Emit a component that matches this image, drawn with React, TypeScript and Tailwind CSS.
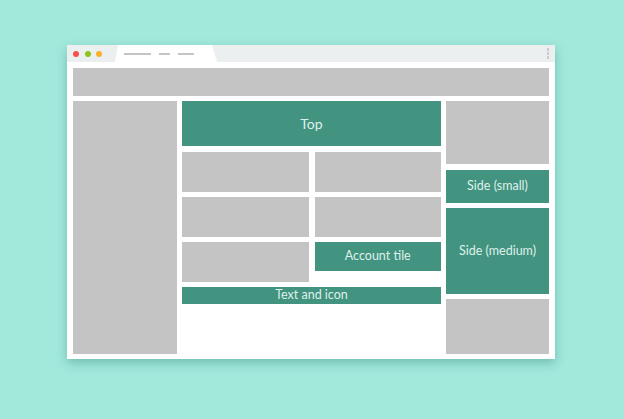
import React from "react";

const Gray = ({ className = "" }: { className?: string }) => (
  <div className={`bg-[#c4c4c4] ${className}`} />
);

const Green = ({ className = "", children }: { className?: string; children: React.ReactNode }) => (
  <div
    className={`bg-[#42937f] text-[#dff1eb] flex items-center justify-center leading-none ${className}`}
  >
    {children}
  </div>
);

export default function App() {
  return (
    <div
      className="w-[624px] h-[419px] bg-[#a2e9dc] pt-[45px] pl-[67px] overflow-hidden"
      style={{ fontFamily: "Lato, 'Open Sans', sans-serif" }}
    >
      <div className="w-[488px] h-[314px] bg-white flex flex-col shadow-[0_4px_10px_rgba(20,110,90,0.35)]">
        {/* title bar */}
        <div className="h-[17px] bg-[#ecefef] flex items-center relative">
          <div className="flex items-center gap-[5.5px] pl-[6px]">
            <span className="w-[6px] h-[6px] rounded-full bg-[#fb4e4e]" />
            <span className="w-[6px] h-[6px] rounded-full bg-[#8fc41a]" />
            <span className="w-[6px] h-[6px] rounded-full bg-[#fbb030]" />
          </div>
          <div className="ml-[13px] h-[17px] w-[102px] bg-white [clip-path:polygon(3px_0,97px_0,102px_100%,0_100%)] flex items-center">
            <span className="ml-[9px] w-[27px] h-[2px] bg-[#c2c4c6]" />
            <span className="ml-[8px] w-[11px] h-[2px] bg-[#c2c4c6]" />
            <span className="ml-[8px] w-[16px] h-[2px] bg-[#c2c4c6]" />
          </div>
          <div className="ml-auto mr-[6px] flex flex-col gap-[1.5px]">
            <span className="w-[2.5px] h-[2.5px] bg-[#c9cbcc]" />
            <span className="w-[2.5px] h-[2.5px] bg-[#c9cbcc]" />
            <span className="w-[2.5px] h-[2.5px] bg-[#c9cbcc]" />
          </div>
        </div>

        {/* content */}
        <div className="flex-1 flex flex-col px-[6px] pt-[6px] pb-[5px]">
          <Gray className="h-[28px]" />
          <div className="flex-1 flex gap-[5px] mt-[5px]">
            <Gray className="w-[104px]" />
            <div className="w-[259px] flex flex-col">
              <Green className="h-[45px] text-[14px]">Top</Green>
              <div className="grid grid-cols-2 gap-x-[6px] gap-y-[5px] mt-[6px]">
                <Gray className="h-[40px]" />
                <Gray className="h-[40px]" />
                <Gray className="h-[40px]" />
                <Gray className="h-[40px]" />
                <Gray className="h-[40px]" />
                <div className="h-[40px]">
                  <Green className="h-[29px] text-[12.5px]">Account tile</Green>
                </div>
              </div>
              <Green className="h-[17px] mt-[5px] text-[12.5px]">Text and icon</Green>
            </div>
            <div className="w-[103px] flex flex-col">
              <Gray className="h-[63px]" />
              <Green className="h-[33px] mt-[6px] text-[12.5px]">Side (small)</Green>
              <Green className="h-[86px] mt-[5px] text-[12.5px]">Side (medium)</Green>
              <Gray className="flex-1 mt-[5px]" />
            </div>
          </div>
        </div>
      </div>
    </div>
  );
}
